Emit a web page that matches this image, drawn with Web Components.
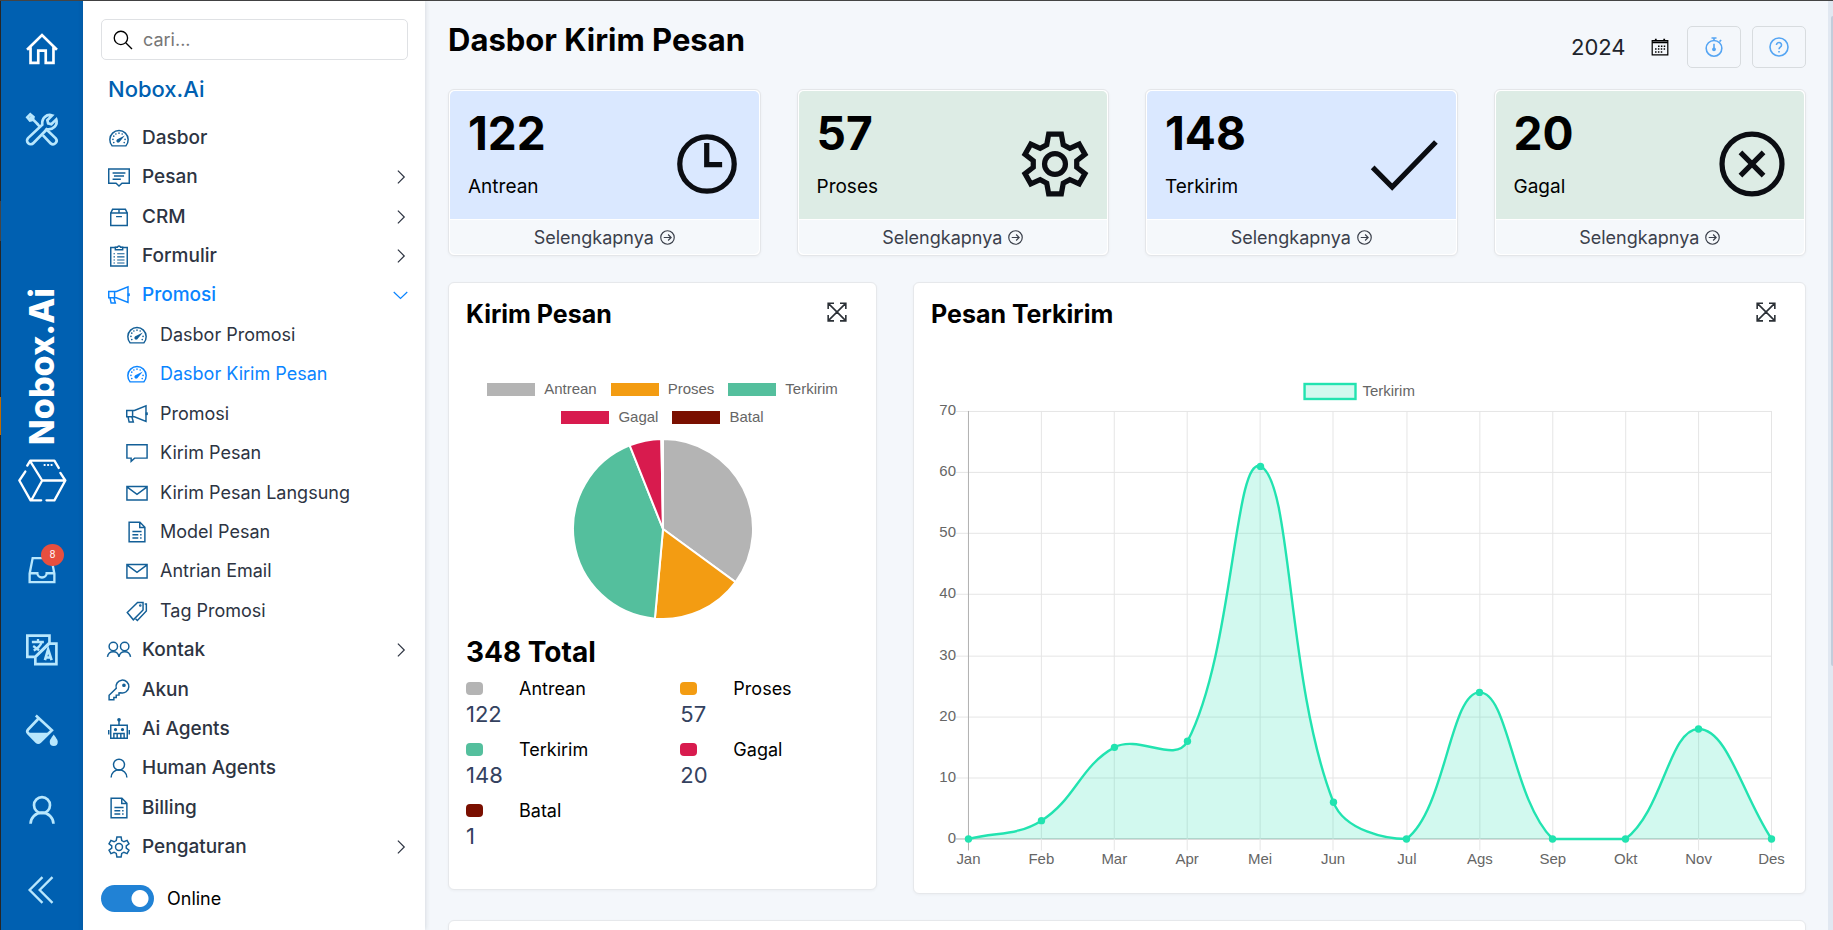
<!DOCTYPE html>
<html lang="id">
<head>
<meta charset="utf-8">
<meta name="viewport" content="width=device-width, initial-scale=1">
<title>Dasbor Kirim Pesan – Nobox.Ai</title>
<style>
  html, body { height: 100%; margin: 0; }
  body { font-family: Inter, "Open Sans", sans-serif; color: #000; background: #f4f7fb; overflow: hidden; }
</style>
</head>
<body>
<nobox-app></nobox-app>

<script>
const define = (name, html, setup) => {
  const template = document.createElement('template');
  template.innerHTML = html;
  customElements.define(name, class extends HTMLElement {
    connectedCallback() {
      if (this.shadowRoot) return;
      this.attachShadow({ mode: 'open' }).append(template.content.cloneNode(true));
      if (setup) setup.call(this, this.shadowRoot);
    }
  });
};
const makeIcon = (name, className = '') => {
  const icon = document.createElement('nb-icon');
  icon.setAttribute('name', name);
  icon.className = className;
  return icon;
};

/* ---------- icons ---------- */
const GEAR = '<path d="M9.7 1.1h4.6l.7 3.9 2.4 1.3 3.4-1.5 2.1 3.7-3 2.3v2.4l3 2.3-2.1 3.7-3.4-1.5-2.4 1.3-.7 3.9H9.7L9 19l-2.4-1.3-3.4 1.5-2.1-3.7 3-2.3v-2.4l-3-2.3 2.1-3.7 3.4 1.5L9 5z"/><circle cx="12" cy="12" r="3.8"/>';
const ICONS = {
  search: '<circle cx="9.5" cy="9.5" r="8"/><path d="M15.3 15.3 22.8 22.8"/>',
  gauge: '<path d="M4.6 20.6A10 10 0 1 1 19.4 20.6Z"/><g fill="currentColor" stroke="none"><circle cx="5.4" cy="13.5" r=".9"/><circle cx="6.3" cy="10" r=".9"/><circle cx="8.6" cy="7.6" r=".9"/><circle cx="12" cy="6.7" r=".9"/><circle cx="15.5" cy="7.6" r=".9"/><circle cx="18.6" cy="13.5" r=".9"/><circle cx="6.3" cy="17" r=".9"/><circle cx="17.7" cy="17" r=".9"/><path d="M18.4 9.2 13 15.8a2 2 0 1 1-2.3-2.7z"/></g>',
  message: '<path d="M.8 3.2h22.4v15.6h-8L12 21.8l-3.2-3H.8z"/><path d="M5 7.6h14M6.5 11h11M5 14.4h9"/>',
  box: '<path d="M3 7.6h18v13.6H3zM3 7.6l2-4h14l2 4M12 3.6v4M8.8 11.6h6.4"/>',
  clipboard: '<path d="M3 2.8h18v20H3z"/><path d="M8 5.2V2.4h2.3a1.8 1.8 0 0 1 3.4 0H16v2.8z" fill="#fff"/><path d="M10 9.6h8M10 13h8M10 16.4h8M10 19.6h8M6 9.6h1.6M6 13h1.6M6 16.4h1.6M6 19.6h1.6" stroke-width="1.2"/>',
  megaphone: '<path d="M.8 8.2h8.4L21.8 3v17L9.2 15H.8zM7.2 8.2V15M2.2 15l1.2 5.8H8L6.4 15"/><path d="M22.6 10.2v3" stroke-width="2.4"/>',
  comment: '<path d="M1 3h22v14.6H9.4L5.6 21v-3.4H1z"/>',
  mail: '<path d="M1 5h22v14.6H1zM1 5.4l11 8 11-8"/>',
  document: '<path d="M3.4 1.4h11.8l5.4 5.4v15.8H3.4zM15 1.6V7h5.4"/><path d="M7 11.4h10M7 15h6.4M15.4 15H17M7 18.6h6.4M15.4 18.6H17"/>',
  tag: '<path d="M1.4 13.6 12.6 2.8h6v8L8 21.6z"/><path d="M20.4 4.4h1.8V12L12.4 22.4l-2-2"/><circle cx="15.6" cy="6" r=".6"/>',
  people: '<circle cx="5.8" cy="8.2" r="4.6"/><circle cx="18.2" cy="8.2" r="4.6"/><path d="M-.6 19.4a6.4 6.6 0 0 1 12.6 0 6.4 6.6 0 0 1 12.6 0"/>',
  key: '<path d="M1.2 22.6v-4.8L9 10.2A7 7 0 1 1 14 15l-2 .2v2.4H9v2.6H6.4v2.4z"/><circle cx="17.4" cy="6.8" r="1.2" fill="currentColor"/>',
  robot: '<path d="M3 8h18v14.2H3zM12 8V2.4M.8 13v5M23.2 13v5"/><path d="M6.4 22v-5h11.2v5M10 17v5M14 17v5"/><g fill="currentColor"><circle cx="12" cy="2" r="1.2"/><circle cx="8.2" cy="12.6" r="1"/><circle cx="15.8" cy="12.6" r="1"/></g>',
  user: '<circle cx="12" cy="8.4" r="6"/><path d="M3.4 22.4a8.6 8.4 0 0 1 17.2 0"/>',
  gear: GEAR,
  right: '<path d="m10.500 3.500 8.500 8.500-8.500 8.500"/>',
  down: '<path d="M5 8l9 8.600L23 8"/>',
  home: '<path d="M.8 12.6 12 1.6l11.2 11M3.4 10.6v11.8h5.8v-9.2h5.6v9.2h5.8V10.6"/>',
  tools: '<path d="m9.2 8.8-4-4 .4-1.8L3.2 1 1 3.2l2 2.4 1.8-.4M3 3l2.4 2.4M8 7.8l2.2 2.2"/><path d="M14.6 11.6 22.3 19a2.7 2.7 0 0 1-3.8 3.8L12.6 16.6"/><path d="M5.6 22.5a2.7 2.7 0 0 1-4.1-3.7L12.2 8.8C11.6 4.2 15.4.4 19.6 1.8L16 5.4l.6 2.4 2.4.6 3.7-3.6c1.4 4.2-2.4 8-7 7.4z"/>',
  inbox: '<path d="M4 1.8h16L22.6 15v7.4H1.4V15zM1.4 14.8H8a4 3.6 0 0 0 8 0h6.6"/>',
  translate: '<path d="M1 1.2h16.6v5.4L6.8 17.2H1zM17.6 7.2h5.2v15.4H7V17.2z"/><path d="M4.4 6h9M9 3.8v2.4M5.8 12.4c3-1.6 5-3.6 6-6.2M5.4 9l4.4 3.2" stroke-width="1.7"/><path d="m14.2 19.6 2.4-8 2.6 8M15 17.6h3.4" stroke-width="2"/>',
  paint: '<path d="m7.400 1.200 12 11-8.800 8.600a2 2 0 0 1-2.800 0L1.600 14.400a2 2 0 0 1 0-2.800L9.400 3.400"/><path d="M2.200 14h15.600l-7.600 7H8.400z" fill="currentColor" stroke="none"/><path d="M20.800 15.400c2.200 3 3 4.200 3 5.600a3 3 0 0 1-6 0c0-1.400.8-2.600 3-5.600z" fill="currentColor" stroke="none"/>',
  collapse: '<path d="M12.400 1 1.400 12l11 11M21 1 10 12l11 11"/>',
  calendar: '<path d="M1.600 3.400h20.800v19H1.600z"/><path d="M1.600 5.800h20.800M6.400 1v3M17.600 1v3" stroke-width="2.400"/><path d="M9.400 11h9.600M5.400 14.800h13.600M5.400 18.600h9.800" stroke-dasharray="2 1.800" stroke-width="2"/>',
  stopwatch: '<circle cx="12" cy="13.6" r="9.4"/><path d="M9 1.2h6M12 1.2v3M12 8v6M18.6 5.6l2-2"/><circle cx="12" cy="14.8" r="1.4" fill="currentColor"/>',
  help: '<circle cx="12" cy="12" r="10.8"/><path d="M9 9.6a3 2.9 0 1 1 4.8 2.2c-1.2.9-1.8 1.4-1.8 3M12 16.8v1.8"/>',
  clock: '<circle cx="12" cy="12" r="9.9"/><path d="M11.9 4.4v7.8h5.6"/>',
  check: '<path d="m.6 13.2 7.1 7.2L23.6 4"/>',
  fail: '<circle cx="12" cy="12" r="10.9"/><path d="m7.8 7.8 8.4 8.4M16.2 7.8l-8.4 8.4"/>',
  arrow: '<circle cx="12" cy="12" r="10.8"/><path d="M6 12h11.6M13 7.2l4.8 4.8-4.8 4.8"/>',
  expand: '<path d="M1.4 8.4v-7h7M15.6 1.4h7v7M22.6 15.6v7h-7M8.4 22.6h-7v-7M1.6 1.6l20.8 20.8M22.4 1.6 1.6 22.4"/>'
};
define('nb-icon', `
  <style>
    :host { display: inline-flex; width: 22px; height: 22px; flex: none; }
    svg { width: 100%; height: 100%; overflow: visible; fill: none; stroke: currentColor; stroke-width: var(--stroke, 1.6); }
  </style>
  <svg viewBox="0 0 24 24" aria-hidden="true"></svg>`,
  function (root) { root.querySelector('svg').innerHTML = ICONS[this.getAttribute('name')] || ''; });

/* ---------- narrow icon rail ---------- */
define('nb-rail', `
  <style>
    :host { display: flex; flex-direction: column; width: 82px; flex: none; background: #0060b1; color: #b8e7fd; --stroke: 2; }
    button { display: flex; align-items: center; justify-content: center; height: 80px; padding: 0; border: 0; background: none; color: inherit; position: relative; }
    nb-icon { width: 32px; height: 32px; }
    .small { width: 28px; height: 28px; }
    .top { padding-top: 8px; display: grid; }
    .home { color: #fff; }
    .bottom { display: grid; }
    .brand { flex: 1; display: flex; flex-direction: column; align-items: center; justify-content: flex-end; gap: 14px; padding-bottom: 28px; color: #fff; text-decoration: none; }
    .word { writing-mode: vertical-rl; transform: rotate(180deg); font-size: 34px; line-height: 44px; font-weight: 800; }
    .brand svg { width: 49px; height: 43px; fill: none; stroke: #fff; stroke-width: 7; stroke-linecap: round; stroke-linejoin: round; }
    .badge { position: absolute; left: 40px; top: 14px; width: 23px; height: 22px; border-radius: 50%; background: #e74f3f; color: #fff; font-size: 10px; line-height: 22px; text-align: center; }
  </style>
  <div class="top">
    <button class="home" aria-label="Beranda"><nb-icon name="home"></nb-icon></button>
    <button aria-label="Alat"><nb-icon name="tools"></nb-icon></button>
  </div>
  <a class="brand" href="#">
    <span class="word">Nobox.Ai</span>
    <svg viewBox="50 535 148 130" aria-hidden="true"><path d="M78 555 87 540h73l13 22M89 545l34 55h69M123 600l-32 58M72 573 54 600l34 60h32M136 660h24l33-60-15-23"/><path d="M130 553h22" stroke-dasharray="1 9.5" stroke-width="6"/></svg>
  </a>
  <div class="bottom">
    <button aria-label="Kotak masuk"><nb-icon class="small" name="inbox"></nb-icon><span class="badge">8</span></button>
    <button aria-label="Bahasa"><nb-icon name="translate"></nb-icon></button>
    <button aria-label="Tema"><nb-icon name="paint"></nb-icon></button>
    <button aria-label="Profil"><nb-icon name="user"></nb-icon></button>
    <button aria-label="Ciutkan"><nb-icon class="small" name="collapse"></nb-icon></button>
  </div>`);

/* ---------- side menu ---------- */
define('nb-menu-item', `
  <style>
    :host { display: flex; flex: 1; min-height: 32px; }
    a { flex: 1; display: flex; align-items: center; gap: 12px; padding-left: 7px; color: #2d3442; text-decoration: none; font-size: 19px; line-height: 24px; font-weight: 500; }
    nb-icon { color: #135f97; }
    .label { flex: 1; }
    .chevron { width: 18px; height: 18px; color: #2d3442; }
    :host([sub]) a { padding-left: 25px; font-size: 18px; font-weight: 400; }
    :host([active]) a, :host([active]) nb-icon { color: #0a84ff; }
  </style>
  <a href="#"><span class="label"><slot></slot></span></a>`,
  function (root) {
    const link = root.querySelector('a');
    const chevron = this.getAttribute('chevron');
    link.prepend(makeIcon(this.getAttribute('icon')));
    if (chevron) link.append(makeIcon(chevron, 'chevron'));
  });

define('nb-sidebar', `
  <style>
    :host { display: flex; flex-direction: column; width: 342px; flex: none; box-sizing: border-box; padding: 18px 17px 0 18px; background: #fff; box-shadow: 0 0 5px rgba(40, 50, 60, .18); z-index: 1; }
    .search { display: flex; align-items: center; gap: 10px; height: 39px; padding-left: 11px; border: 1px solid #dfe1e4; border-radius: 5px; }
    .search nb-icon { width: 20px; height: 20px; }
    input[type=search] { flex: 1; min-width: 0; border: 0; outline: 0; padding: 0; font: 18px/24px Inter, sans-serif; background: none; }
    input::placeholder { color: #777; opacity: 1; }
    h2 { margin: 14px 0 0 7px; font-size: 22px; line-height: 30px; font-weight: 500; color: #0060b1; }
    nav { flex: 1; display: flex; flex-direction: column; margin-top: 14px; }
    label { display: flex; align-items: center; gap: 13px; height: 63px; font-size: 18px; }
    input[type=checkbox] { appearance: none; margin: 0; width: 53px; height: 27px; border-radius: 14px; background: radial-gradient(circle at 39px 50%, #fff 8px, #2182d5 9px); }
  </style>
  <div class="search"><nb-icon name="search"></nb-icon><input type="search" placeholder="cari..." aria-label="Cari"></div>
  <h2>Nobox.Ai</h2>
  <nav>
    <nb-menu-item icon="gauge">Dasbor</nb-menu-item>
    <nb-menu-item icon="message" chevron="right">Pesan</nb-menu-item>
    <nb-menu-item icon="box" chevron="right">CRM</nb-menu-item>
    <nb-menu-item icon="clipboard" chevron="right">Formulir</nb-menu-item>
    <nb-menu-item icon="megaphone" chevron="down" active>Promosi</nb-menu-item>
    <nb-menu-item sub icon="gauge">Dasbor Promosi</nb-menu-item>
    <nb-menu-item sub icon="gauge" active>Dasbor Kirim Pesan</nb-menu-item>
    <nb-menu-item sub icon="megaphone">Promosi</nb-menu-item>
    <nb-menu-item sub icon="comment">Kirim Pesan</nb-menu-item>
    <nb-menu-item sub icon="mail">Kirim Pesan Langsung</nb-menu-item>
    <nb-menu-item sub icon="document">Model Pesan</nb-menu-item>
    <nb-menu-item sub icon="mail">Antrian Email</nb-menu-item>
    <nb-menu-item sub icon="tag">Tag Promosi</nb-menu-item>
    <nb-menu-item icon="people" chevron="right">Kontak</nb-menu-item>
    <nb-menu-item icon="key">Akun</nb-menu-item>
    <nb-menu-item icon="robot">Ai Agents</nb-menu-item>
    <nb-menu-item icon="user">Human Agents</nb-menu-item>
    <nb-menu-item icon="document">Billing</nb-menu-item>
    <nb-menu-item icon="gear" chevron="right">Pengaturan</nb-menu-item>
  </nav>
  <label><input type="checkbox" checked>Online</label>`);

/* ---------- page header ---------- */
define('nb-page-header', `
  <style>
    :host { display: flex; align-items: flex-start; justify-content: space-between; height: 56px; }
    h1 { margin: 0; font-size: 31px; line-height: 28px; font-weight: 700; }
    .tools { display: flex; align-items: center; gap: 11px; }
    .date { display: flex; align-items: center; gap: 20px; margin-right: 7px; }
    .date input { width: 60px; border: 0; padding: 0; background: none; font: 22px/30px Inter, sans-serif; color: #20242b; }
    .date nb-icon { width: 18px; height: 18px; }
    button { display: flex; align-items: center; justify-content: center; width: 54px; height: 42px; padding: 0; border: 1px solid #d8dcdf; border-radius: 5px; background: none; color: #55a5f3; }
    button nb-icon { width: 20px; height: 20px; --stroke: 1.9; }
  </style>
  <h1>Dasbor Kirim Pesan</h1>
  <div class="tools">
    <label class="date"><input type="text" value="2024" aria-label="Tahun"><nb-icon name="calendar"></nb-icon></label>
    <button aria-label="Segarkan"><nb-icon name="stopwatch"></nb-icon></button>
    <button aria-label="Bantuan"><nb-icon name="help"></nb-icon></button>
  </div>`);

/* ---------- status card ---------- */
define('nb-stat-card', `
  <style>
    :host { display: block; border: 1px solid #e4e6e9; border-radius: 6px; padding: 1px; background: #fff; box-shadow: 0 1px 3px rgba(0, 0, 0, .04); }
    .body { display: flex; align-items: center; justify-content: space-between; height: 128px; box-sizing: border-box; padding: 18px 19px 0 18px; border-radius: 5px 5px 0 0; background: var(--tint); }
    .text { align-self: flex-start; }
    .value { font-size: 46px; line-height: 48px; font-weight: 700; }
    .label { font-size: 19px; line-height: 24px; padding-top: 18px; }
    nb-icon { width: 66px; height: 66px; --stroke: 1.9; color: #0b0d12; }
    a { display: flex; align-items: center; justify-content: center; gap: 6px; height: 34px; margin-top: 1px; border-radius: 0 0 5px 5px; background: #f5f8fb; color: #3b404b; text-decoration: none; font-size: 18px; }
    a nb-icon { width: 15px; height: 15px; color: inherit; }
  </style>
  <div class="body">
    <div class="text"><div class="value"><slot name="value"></slot></div><div class="label"><slot></slot></div></div>
  </div>
  <a href="#">Selengkapnya <nb-icon name="arrow"></nb-icon></a>`,
  function (root) { root.querySelector('.body').append(makeIcon(this.getAttribute('icon'))); });

/* ---------- generic panel ---------- */
define('nb-panel', `
  <style>
    :host { display: block; box-sizing: border-box; border: 1px solid #e6e8eb; border-radius: 6px; background: #fff; box-shadow: 0 1px 3px rgba(0, 0, 0, .04); padding: 16px 17px 0; }
    header { display: flex; justify-content: space-between; align-items: flex-start; padding-right: 12px; }
    h3 { margin: 0; font-size: 25px; line-height: 30px; font-weight: 700; }
    button { display: flex; padding: 3px 0; border: 0; background: none; color: #2b3036; }
    nb-icon { width: 20px; height: 20px; --stroke: 1.9; }
  </style>
  <header><h3><slot name="title"></slot></h3><button aria-label="Perbesar"><nb-icon name="expand"></nb-icon></button></header>
  <slot></slot>`);

/* ---------- pie chart and its totals ---------- */
const STATUS = [
  ['Antrean', 122, '#b4b4b4'], ['Proses', 57, '#f39c12'], ['Terkirim', 148, '#54bf9d'],
  ['Gagal', 20, '#d81b4e'], ['Batal', 1, '#7a0f00']
];
define('nb-pie', `
  <style>
    :host { display: block; padding: 46px 0 40px; }
    .legend { display: flex; flex-wrap: wrap; justify-content: center; column-gap: 14px; width: 380px; max-width: 100%; margin: 0 auto; font: 15px/28px "Liberation Sans", Arial, sans-serif; color: #666; }
    .legend span { display: flex; align-items: center; gap: 9px; }
    .legend i { width: 48px; height: 13px; }
    svg { display: block; width: 180px; height: 180px; margin: 8px auto 0; }
    h4 { margin: 16px 0 0; font-size: 28px; line-height: 34px; font-weight: 700; }
    dl { display: grid; grid-template-columns: 6fr 5fr; row-gap: 10px; margin: 7px 0 0; }
    dt { display: flex; align-items: center; gap: 36px; font-size: 18px; line-height: 25px; }
    dt i { width: 17px; height: 13px; border-radius: 4px; }
    dd { margin: 0; font-size: 22px; line-height: 26px; color: #34425f; }
  </style>
  <div class="legend"></div>
  <svg viewBox="-90 -90 180 180" role="img" aria-label="Diagram kirim pesan"></svg>
  <h4></h4>
  <dl></dl>`,
  function (root) {
    const total = STATUS.reduce((sum, row) => sum + row[1], 0);
    const at = share => {
      const a = share * 2 * Math.PI - Math.PI / 2;
      return `${(90 * Math.cos(a)).toFixed(2)} ${(90 * Math.sin(a)).toFixed(2)}`;
    };
    let sum = 0, slices = '', legend = '', rows = '';
    for (const [name, n, color] of STATUS) {
      const from = at(sum / total), to = at((sum + n) / total);
      slices += `<path d="M0 0L${from}A90 90 0 0 1 ${to}Z" fill="${color}" stroke="#fff" stroke-width="2"/>`;
      sum += n;
      legend += `<span><i style="background:${color}"></i>${name}</span>`;
      rows += `<div><dt><i style="background:${color}"></i>${name}</dt><dd>${n}</dd></div>`;
    }
    root.querySelector('svg').innerHTML = slices;
    root.querySelector('.legend').innerHTML = legend;
    root.querySelector('h4').textContent = `${total} Total`;
    root.querySelector('dl').innerHTML = rows;
  });

/* ---------- area chart ---------- */
define('nb-area-chart', `
  <style>
    :host { display: block; padding: 52px 0 19px; }
    svg { display: block; width: 100%; overflow: visible; font: 15px "Liberation Sans", Arial, sans-serif; }
    text { fill: #666; }
  </style>
  <svg viewBox="0 0 858 494" role="img" aria-label="Pesan terkirim per bulan"></svg>`,
  function (root) {
    const months = ['Jan', 'Feb', 'Mar', 'Apr', 'Mei', 'Jun', 'Jul', 'Ags', 'Sep', 'Okt', 'Nov', 'Des'];
    const data = [0, 3, 15, 16, 61, 6, 0, 24, 0, 0, 18, 0];
    const left = 37, right = 841, top = 30, bottom = 458, tension = .4;
    const x = i => left + i * (right - left) / 11;
    const y = v => bottom - v * (bottom - top) / 70;
    const clamp = v => Math.max(top, Math.min(bottom + .5, v));
    let out = '';
    for (let v = 0; v <= 70; v += 10) {
      const gy = Math.round(y(v)) + .5;
      out += `<path d="M${left - 12} ${gy}H${right}" stroke="${v ? '#e5e5e5' : '#b0b0b0'}"/>`;
      out += `<text x="${left - 12}" y="${gy + 4}" text-anchor="end">${v}</text>`;
    }
    months.forEach((m, i) => {
      const gx = Math.round(x(i)) + .5;
      out += `<path d="M${gx} ${top}V${bottom + 12}" stroke="${i ? '#e5e5e5' : '#b0b0b0'}"/>`;
      out += `<text x="${gx}" y="${bottom + 26}" text-anchor="middle">${m}</text>`;
    });
    const pts = data.map((v, i) => ({ x: x(i) + .5, y: y(v) + .5 }));
    const ctrl = pts.map((p, i) => {
      const a = pts[i - 1] || p, b = pts[i + 1] || p;
      const d1 = Math.hypot(p.x - a.x, p.y - a.y), d2 = Math.hypot(b.x - p.x, b.y - p.y);
      const fa = tension * d1 / (d1 + d2), fb = tension * d2 / (d1 + d2);
      return {
        px: p.x - fa * (b.x - a.x), py: clamp(p.y - fa * (b.y - a.y)),
        nx: p.x + fb * (b.x - a.x), ny: clamp(p.y + fb * (b.y - a.y))
      };
    });
    let line = `M${pts[0].x} ${pts[0].y}`;
    for (let i = 1; i < pts.length; i++) {
      line += `C${ctrl[i - 1].nx} ${ctrl[i - 1].ny} ${ctrl[i].px} ${ctrl[i].py} ${pts[i].x} ${pts[i].y}`;
    }
    out += `<path d="${line}Z" fill="#1de2ae" fill-opacity=".2"/>`;
    out += `<path d="${line}" fill="none" stroke="#22e3b0" stroke-width="2.4"/>`;
    for (const p of pts) out += `<circle cx="${p.x}" cy="${p.y}" r="3.7" fill="#22e3b0"/>`;
    out += `<rect x="374" y="3" width="51" height="15" fill="#d2f9ef" stroke="#22e3b0" stroke-width="2.4"/><text x="432" y="15">Terkirim</text>`;
    root.querySelector('svg').innerHTML = out;
  });

/* ---------- whole app ---------- */
define('nobox-app', `
  <style>
    :host { display: flex; height: 100vh; box-sizing: border-box; border-top: 1px solid #444; }
    .edge { width: 1px; flex: none; background: linear-gradient(#262626 200px, #454545 200px 240px, #262626 240px 396px, #c06a00 396px 434px, #262626 434px); }
    main { flex: 1; min-width: 0; overflow: hidden; padding: 25px 22px 0 23px; }
    .stats { display: grid; grid-template-columns: repeat(4, 1fr); gap: 36px; margin-top: 7px; }
    .blue { --tint: #dae8ff; }
    .green { --tint: #ddece5; }
    .charts { display: grid; grid-template-columns: 429fr 893fr; gap: 36px; align-items: start; margin: 26px 0; }
    .more { height: 200px; }
    .scroll { width: 5px; flex: none; background: #e1e8f1; display: flex; justify-content: flex-end; }
    .scroll i { width: 2px; height: 70%; margin-top: 15px; background: #c2cddb; border-radius: 2px 0 0 2px; }
  </style>
  <div class="edge"></div>
  <nb-rail></nb-rail>
  <nb-sidebar></nb-sidebar>
  <main>
    <nb-page-header></nb-page-header>
    <section class="stats">
      <nb-stat-card class="blue" icon="clock"><span slot="value">122</span>Antrean</nb-stat-card>
      <nb-stat-card class="green" icon="gear"><span slot="value">57</span>Proses</nb-stat-card>
      <nb-stat-card class="blue" icon="check"><span slot="value">148</span>Terkirim</nb-stat-card>
      <nb-stat-card class="green" icon="fail"><span slot="value">20</span>Gagal</nb-stat-card>
    </section>
    <section class="charts">
      <nb-panel><span slot="title">Kirim Pesan</span><nb-pie></nb-pie></nb-panel>
      <nb-panel><span slot="title">Pesan Terkirim</span><nb-area-chart></nb-area-chart></nb-panel>
    </section>
    <nb-panel class="more"></nb-panel>
  </main>
  <div class="scroll"><i></i></div>`);
</script>
</body>
</html>
